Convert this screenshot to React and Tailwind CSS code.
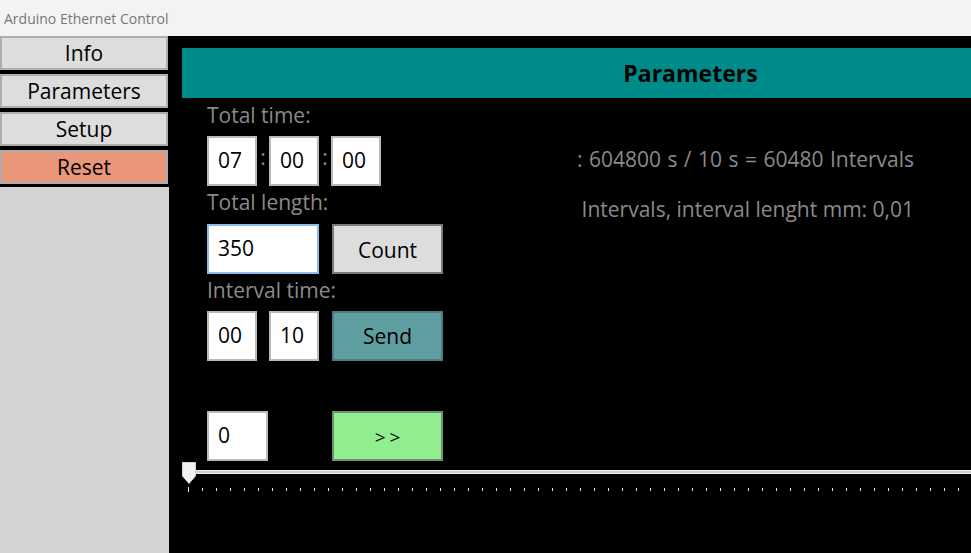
import React from "react";

const ticks = Array.from({ length: 56 }, (_, i) => i);

function SideButton({ label, className = "bg-[#dddddd]" }) {
    return (
        <button
            className={`w-[168px] h-[34px] border-2 border-[#adadad] text-[21px] leading-none text-black ${className}`}
        >
            {label}
        </button>
    );
}

function Box({ value, className = "w-[50px]", border = "border-[#b9b9b9]" }) {
    return (
        <div
            className={`h-[50px] border-2 ${border} bg-white pl-[9px] flex items-center text-[21px] text-black ${className}`}
        >
            {value}
        </div>
    );
}

function Colon() {
    return (
        <div className="w-[12px] h-[50px] flex items-center justify-center text-[21px] text-[#8a8a8a] pb-[6px]">
            :
        </div>
    );
}

export default function App() {
    return (
        <div className="w-[971px] h-[553px] flex flex-col overflow-hidden font-['Open_Sans',sans-serif]">
            <div className="h-[36px] shrink-0 bg-[#f3f3f3] flex items-center pl-[4px] text-[14px] text-[#777777]">
                Arduino Ethernet Control
            </div>

            <div className="flex flex-1 min-h-0">
                {/* side menu */}
                <div className="w-[169px] flex flex-col">
                    <div className="bg-black flex flex-col gap-[4px] pt-[0px] pb-[3px]">
                        <SideButton label="Info" />
                        <SideButton label="Parameters" />
                        <SideButton label="Setup" />
                        <SideButton label="Reset" className="bg-[#e9967a]" />
                    </div>
                    <div className="flex-1 bg-[#d3d3d3]" />
                </div>

                {/* main */}
                <div className="flex-1 bg-black pl-[13px] pt-[12px] flex flex-col">
                    <div className="h-[50px] bg-[#008b8b] flex items-center justify-center pl-[228px] font-bold text-[23px] text-black">
                        Parameters
                    </div>

                    <div className="flex">
                        <div className="pl-[25px] w-[290px] flex flex-col text-[21px] text-[#8a8a8a]">
                            <div className="mt-[4px] h-[26px] leading-[26px]">Total time:</div>
                            <div className="mt-[8px] flex">
                                <Box value="07" />
                                <Colon />
                                <Box value="00" />
                                <Colon />
                                <Box value="00" />
                            </div>

                            <div className="mt-[3px] h-[26px] leading-[26px]">Total length:</div>
                            <div className="mt-[9px] flex gap-[13px]">
                                <Box value="350" className="w-[112px]" border="border-[#8cbcec]" />
                                <button className="w-[111px] h-[50px] border-2 border-[#7a7a7a] bg-[#dddddd] text-[21px] text-black pt-[4px]">
                                    Count
                                </button>
                            </div>

                            <div className="mt-[3px] h-[26px] leading-[26px]">Interval time:</div>
                            <div className="mt-[8px] flex">
                                <Box value="00" />
                                <div className="w-[12px]" />
                                <Box value="10" />
                                <div className="w-[13px]" />
                                <button className="w-[111px] h-[50px] border-2 border-[#4c7d7f] bg-[#5f9ea0] text-[21px] text-black pt-[2px]">
                                    Send
                                </button>
                            </div>

                            <div className="mt-[50px] flex gap-[64px]">
                                <Box value="0" className="w-[61px]" />
                                <button className="w-[111px] h-[50px] border-2 border-[#6f8f6f] bg-[#90ee90] text-[19px] text-black tracking-[4px] pl-[4px] pt-[2px]">
                                    &gt;&gt;
                                </button>
                            </div>
                        </div>

                        <div className="flex-1 flex flex-col items-end pr-[57px] text-[21px] text-[#8a8a8a]">
                            <div className="mt-[48px] leading-[26px] [word-spacing:1px]">: 604800 s / 10 s = 60480 Intervals</div>
                            <div className="mt-[24px] leading-[26px]">Intervals, interval lenght mm: 0,01</div>
                        </div>
                    </div>

                    {/* slider */}
                    <div className="relative h-[21px] mt-[1px]">
                        <div className="absolute left-[6px] right-0 top-[8px] h-[4px] bg-[#cfcfcf] border-y border-[#ececec]" />
                        <svg className="absolute left-0 top-0" width="14" height="22" viewBox="0 0 14 22">
                            <polygon points="0.5,0.5 13.5,0.5 13.5,14 7,21.5 0.5,14" fill="#f2f2f2" stroke="#d4d4d4" />
                        </svg>
                    </div>
                    <div className="flex gap-[13px] pl-[6px] mt-[4px] items-start">
                        {ticks.map((i) => (
                            <div
                                key={i}
                                className={i === 0 ? "w-[1px] h-[5px] bg-[#e0e0e0]" : "w-[1px] h-[3px] mt-[1px] bg-[#e0e0e0]"}
                            />
                        ))}
                    </div>
                </div>
            </div>
        </div>
    );
}
